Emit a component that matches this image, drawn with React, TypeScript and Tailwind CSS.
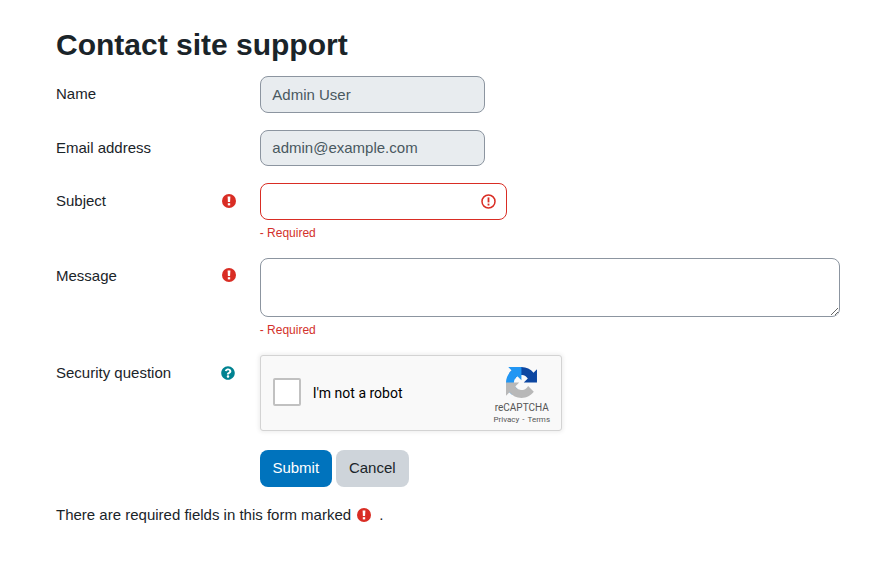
import { useState } from "react";
import type { ReactNode } from "react";
import { FaQuestionCircle } from "react-icons/fa";

type FormRowProps = {
  label: string;
  icon?: ReactNode;
  className?: string;
  children: ReactNode;
};

function FormRow({ label, icon, className, children }: FormRowProps) {
  return (
    <div className={`flex ${className || ""}`}>
      <div className="flex w-[203.75px] shrink-0 items-start justify-between pt-[7px] pr-6">
        <label className="leading-[22.5px]">{label}</label>
        {icon}
      </div>
      <div className="flex-1">{children}</div>
    </div>
  );
}

function RequiredIcon({ className }: { className?: string }) {
  return (
    <svg
      className={`size-[14px] shrink-0 ${className || ""}`}
      viewBox="0 0 14 14"
    >
      <circle cx="7" cy="7" r="7" fill="#d92d24" />
      <path d="M5.6 2.4h2.8l-.3 5.6H5.9z" fill="#fff" />
      <path d="M5.8 9.2h2.4v2.2H5.8z" fill="#fff" />
    </svg>
  );
}

function RequiredFeedback() {
  return (
    <div className="mt-1 text-[12px] leading-[18px] text-[#d3312b]">
      - Required
    </div>
  );
}

function RecaptchaLogo() {
  return (
    <svg className="h-[31px] w-[31px]" viewBox="0 0 64 64">
      <path
        fill="#0d47a1"
        d="M64 31.955l-.033-1.37V4.687l-7.16 7.16C50.948 4.674 42.033.093 32.05.093c-10.4 0-19.622 4.96-25.458 12.64l11.736 11.86a15.55 15.55 0 0 1 4.754-5.334c2.05-1.6 4.952-2.906 8.968-2.906.485 0 .86.057 1.135.163 4.976.393 9.288 3.14 11.828 7.124l-8.307 8.307L64 31.953"
      />
      <path
        fill="#2196f3"
        d="M31.862.094l-1.37.033H4.594l7.16 7.16C4.58 13.147 0 22.06 0 32.046c0 10.4 4.96 19.622 12.64 25.458L24.5 45.768a15.55 15.55 0 0 1-5.334-4.754c-1.6-2.05-2.906-4.952-2.906-8.968 0-.485.057-.86.163-1.135.393-4.976 3.14-9.288 7.124-11.828l8.307 8.307L31.86.095"
      />
      <path
        fill="#b8b8b8"
        d="M.001 32.045l.033 1.37v25.898l7.16-7.16c5.86 7.173 14.774 11.754 24.76 11.754 10.4 0 19.622-4.96 25.458-12.64l-11.736-11.86a15.55 15.55 0 0 1-4.754 5.334c-2.05 1.6-4.952 2.906-8.968 2.906-.485 0-.86-.057-1.135-.163-4.976-.393-9.288-3.14-11.828-7.124l8.307-8.307c-10.522.04-22.4.066-27.295-.005"
      />
    </svg>
  );
}

function Recaptcha() {
  return (
    <div className="flex h-[76px] w-[302px] justify-between rounded-[3px] border border-[#d3d3d3] bg-[#f9f9f9] font-[Roboto,sans-serif] shadow-[0_0_4px_1px_rgba(0,0,0,0.08)]">
      <div className="flex items-start pt-[22px] pl-3">
        <button className="size-7 rounded-[2px] border-2 border-[#c1c1c1] bg-white" />
        <span className="mt-[7px] ml-3 text-[14px] leading-[17px] text-black">
          I'm not a robot
        </span>
      </div>
      <div className="mr-1 flex w-[70px] flex-col items-center pt-[11px] text-[#555]">
        <RecaptchaLogo />
        <div className="mt-[5px] text-[10px] leading-[10px]">reCAPTCHA</div>
        <div className="mt-[2px] text-[8px] leading-[10px] whitespace-nowrap">
          Privacy<span className="mx-[3px]">-</span>Terms
        </div>
      </div>
    </div>
  );
}

export default function App() {
  const [subject, setSubject] = useState("");
  const [message, setMessage] = useState("");

  return (
    <form
      onSubmit={(e) => e.preventDefault()}
      className="bg-white pt-[27px] pr-[53px] pl-14 font-['Liberation_Sans',Arial,sans-serif] text-[15px] leading-[22.5px] text-[#1a2429]"
    >
      <h2 className="mb-[13px] text-[30px] leading-9 font-bold">
        Contact site support
      </h2>

      <FormRow label="Name" className="mb-[17px]">
        <input
          disabled
          value="Admin User"
          className="block h-[36.5px] w-[225px] rounded-lg border border-[#8c95a0] bg-[#e8ecef] py-1.5 pr-3 pl-[11.6px] text-[#495860]"
        />
      </FormRow>

      <FormRow label="Email address" className="mb-[17px]">
        <input
          disabled
          value="admin@example.com"
          className="block h-[36.5px] w-[225px] rounded-lg border border-[#8c95a0] bg-[#e8ecef] py-1.5 pr-3 pl-[11.6px] text-[#495860]"
        />
      </FormRow>

      <FormRow
        label="Subject"
        icon={<RequiredIcon className="mt-[3.5px]" />}
        className="mb-4"
      >
        <div className="flex h-[36.5px] w-[247px] items-center rounded-lg border border-[#d92d24] pr-[10px] pl-3">
          <input
            value={subject}
            onChange={(e) => setSubject(e.target.value)}
            className="min-w-0 flex-1 outline-none"
          />
          <svg
            className="size-[15px] shrink-0"
            viewBox="0 0 15 15"
            fill="none"
            stroke="#d92d24"
          >
            <circle cx="7.5" cy="7.5" r="6.5" strokeWidth="1.5" />
            <path d="M7.5 3.4v5" strokeWidth="1.8" />
            <path d="M7.5 9.6v1.9" strokeWidth="1.8" />
          </svg>
        </div>
        <RequiredFeedback />
      </FormRow>

      <FormRow
        label="Message"
        icon={<RequiredIcon className="mt-[3.5px]" />}
        className="mb-4"
      >
        <textarea
          rows={2}
          value={message}
          onChange={(e) => setMessage(e.target.value)}
          className="block h-[59px] w-full rounded-lg border border-[#8c95a0] px-3 py-1.5"
        />
        <RequiredFeedback />
      </FormRow>

      <FormRow
        label="Security question"
        icon={
          <FaQuestionCircle className="mt-1 mr-px size-[14px] text-[#008391]" />
        }
        className="mb-[19px]"
      >
        <Recaptcha />
      </FormRow>

      <div className="ml-[203.75px] flex gap-1">
        <button className="h-[37px] w-[72px] rounded-lg bg-[#0073bd] text-white">
          Submit
        </button>
        <button className="h-[37px] w-[73px] rounded-lg bg-[#ced4da]">
          Cancel
        </button>
      </div>

      <div className="mt-[17px] flex items-center">
        There are required fields in this form marked
        <RequiredIcon className="mr-[5px] ml-[5.5px]" />
        <span className="ml-[3.5px]">.</span>
      </div>
    </form>
  );
}
